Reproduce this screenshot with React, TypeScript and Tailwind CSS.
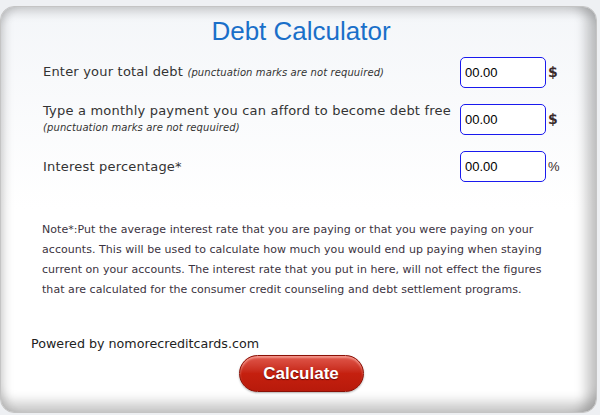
import React from 'react'

const verdana = 'font-["DejaVu_Sans",Verdana,sans-serif]'
const arial = 'font-["Liberation_Sans",Arial,sans-serif]'

function MoneyInput({ unit, bold }: { unit: string; bold?: boolean }) {
  return (
    <div className="flex items-center">
      <input
        defaultValue="00.00"
        className={`${arial} w-[86px] h-[31px] rounded-[5px] border border-[#1a1aee] bg-white px-[4px] text-[13px] text-black outline-none`}
      />
      <span
        className={`${bold ? `${verdana} font-bold text-[14px]` : `${arial} text-[13px]`} ml-[2px] text-[#3a2a2a]`}
      >
        {unit}
      </span>
    </div>
  )
}

export default function App() {
  return (
    <div className="min-h-[415px] w-[600px] bg-[#eef0f3] pt-[6px] pr-[3px] pb-[2px]">
      <div className="h-[407px] rounded-[14px] border border-[#c4c4c4] bg-gradient-to-b from-[#f4f6f9] via-white to-white shadow-[inset_10px_0_10px_-6px_rgba(0,0,0,0.14),inset_-16px_0_12px_-6px_rgba(0,0,0,0.22),inset_0_-16px_12px_-6px_rgba(0,0,0,0.2),inset_0_12px_10px_-6px_rgba(0,0,0,0.14)]">
        {/* Title */}
        <h1 className={`${arial} pt-[9px] pl-[5px] text-center text-[26px] leading-[30px] text-[#1a6fc9]`}>
          Debt Calculator
        </h1>

        {/* Inputs */}
        <div className={`${verdana} mt-[11px] flex flex-col gap-[15px] pl-[42px] text-[#333]`}>
          <div className="flex items-center">
            <div className="w-[417px] text-[13px] leading-4 tracking-[0.2px]">
              Enter your total debt{' '}
              <i className="text-[10px] tracking-[0.1px]">(punctuation marks are not requuired)</i>
            </div>
            <MoneyInput unit="$" bold />
          </div>

          <div className="flex items-center">
            <div className="w-[417px]">
              <div className="text-[13px] leading-4 tracking-[0.2px]">
                Type a monthly payment you can afford to become debt free
              </div>
              <i className="mt-[2px] block text-[10px] leading-[14px] tracking-[0.1px]">
                (punctuation marks are not requuired)
              </i>
            </div>
            <MoneyInput unit="$" bold />
          </div>

          <div className="mt-[1px] flex items-center">
            <div className="w-[417px] text-[13px] leading-4 tracking-[0.2px]">Interest percentage*</div>
            <MoneyInput unit="%" />
          </div>
        </div>

        {/* Note */}
        <p className={`${verdana} mt-[38px] pl-[41px] pr-[50px] text-[11px] leading-[20px] tracking-[0.05px] text-[#3b3340]`}>
          Note*:Put the average interest rate that you are paying or that you were paying on your
          accounts. This will be used to calculate how much you would end up paying when staying
          current on your accounts. The interest rate that you put in here, will not effect the
          figures that are calculated for the consumer credit counseling and debt settlement
          programs.
        </p>

        <p className={`${verdana} mt-[36px] pl-[30px] text-[12.7px] leading-4 text-[#222]`}>
          Powered by nomorecreditcards.com
        </p>

        <div className="mt-[3px] flex justify-center pl-[5px]">
          <button
            className={`${arial} h-[37px] w-[125px] rounded-full border border-[#8a1006] bg-gradient-to-b from-[#e0574b] via-[#c5200f] to-[#b81a0b] text-[17px] font-bold text-white shadow-[inset_0_2px_2px_rgba(255,190,180,0.6),0_1px_2px_rgba(0,0,0,0.3)] [text-shadow:0_1px_1px_rgba(80,0,0,0.8)]`}
          >
            Calculate
          </button>
        </div>
      </div>
    </div>
  )
}
